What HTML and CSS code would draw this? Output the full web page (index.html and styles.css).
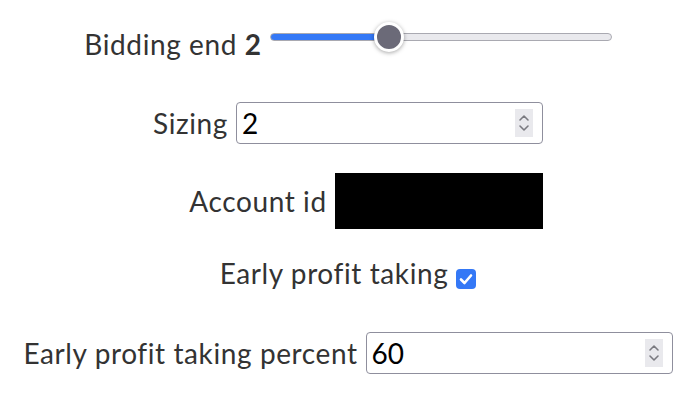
FILE: index.html
```html
<!DOCTYPE html>
<html lang="en">
<head>
  <meta charset="UTF-8" />
  <meta name="viewport" content="width=device-width, initial-scale=1.0"/>
  <title>Bot Settings</title>
  <link rel="stylesheet" href="styles.css">
</head>
<body>

<form id="settings-form">

  <div class="row row-slider">
    <label for="bidding-end">Bidding end <b id="bidding-val">2</b></label>
    <input type="range" id="bidding-end" class="slider" min="0" max="6" value="2" style="--fill: 35%">
  </div>

  <div class="row">
    <label for="sizing">Sizing</label>
    <div class="num-box">
      <input type="number" id="sizing" value="2">
      <span class="spin">
        <svg width="18" height="28" viewBox="0 0 18 28">
          <path d="M5 11 L9 7 L13 11" fill="none" stroke="#7a7a80" stroke-width="1.6" stroke-linecap="round" stroke-linejoin="round"/>
          <path d="M5 17 L9 21 L13 17" fill="none" stroke="#7a7a80" stroke-width="1.6" stroke-linecap="round" stroke-linejoin="round"/>
        </svg>
      </span>
    </div>
  </div>

  <div class="row row-account">
    <label for="account">Account id</label>
    <div class="redacted" id="account"></div>
  </div>

  <div class="row row-check">
    <label for="early-profit">Early profit taking</label>
    <span class="check" id="early-profit">
      <svg width="20" height="20" viewBox="0 0 20 20">
        <path d="M5 10.5 L8.5 14 L15 6.5" fill="none" stroke="#fff" stroke-width="2.6" stroke-linecap="round" stroke-linejoin="round"/>
      </svg>
    </span>
  </div>

  <div class="row">
    <label for="profit-percent">Early profit taking percent</label>
    <div class="num-box">
      <input type="number" id="profit-percent" value="60">
      <span class="spin">
        <svg width="18" height="28" viewBox="0 0 18 28">
          <path d="M5 11 L9 7 L13 11" fill="none" stroke="#7a7a80" stroke-width="1.6" stroke-linecap="round" stroke-linejoin="round"/>
          <path d="M5 17 L9 21 L13 17" fill="none" stroke="#7a7a80" stroke-width="1.6" stroke-linecap="round" stroke-linejoin="round"/>
        </svg>
      </span>
    </div>
  </div>

</form>

<script>
  const slider = document.getElementById('bidding-end');
  const sliderVal = document.getElementById('bidding-val');

  slider.addEventListener('input', () => {
    const pct = (slider.value - slider.min) / (slider.max - slider.min) * 100;
    slider.style.setProperty('--fill', pct + '%');
    sliderVal.textContent = slider.value;
  });
</script>

</body>
</html>
```

FILE: styles.css
```css
body {
  margin: 0;
  font-family: Lato, "Liberation Sans", sans-serif;
  background: #fff;
  color: #333;
}
form {
  display: flex;
  flex-direction: column;
  align-items: center;
  padding-top: 22px;
}
.row {
  display: flex;
  align-items: center;
  gap: 8px;
  font-size: 28px;
}
label {
  letter-spacing: 0.6px;
}
.row + .row {
  margin-top: 29px;
}
.row-slider {
  align-items: flex-start;
}
.row-slider + .row {
  margin-top: 41px;
}
.row-account + .row {
  margin-top: 27px;
}
.row-check + .row {
  margin-top: 30px;
}
.row-slider label {
  margin-top: 5px;
}
.row-check label {
  margin-bottom: 12px;
}
.row-account {
  padding-left: 36px;
}
label b {
  font-weight: 700;
}

/* range */
.slider {
  -webkit-appearance: none;
  appearance: none;
  width: 342px;
  height: 30px;
  margin: 0;
  background: transparent;
}
.slider::-webkit-slider-runnable-track {
  height: 8px;
  border-radius: 5px;
  border: 1px solid #a9a9b1;
  background: linear-gradient(to right, #3478f6 var(--fill), #e9e9ed var(--fill));
}
.slider::-webkit-slider-thumb {
  -webkit-appearance: none;
  width: 30px;
  height: 30px;
  margin-top: -12px;
  border-radius: 50%;
  border: 3px solid #fff;
  box-sizing: border-box;
  background: #6b6a78;
  box-shadow: 0 1px 4px rgba(0,0,0,0.35);
}

/* number box */
.num-box {
  display: flex;
  align-items: center;
  width: 307px;
  height: 42px;
  box-sizing: border-box;
  border: 1px solid #8f8f9d;
  border-radius: 4px;
  padding: 0 9px 0 5px;
}
.num-box input {
  flex: 1;
  min-width: 0;
  border: none;
  outline: none;
  padding: 0;
  font: inherit;
  font-size: 28px;
  color: #000;
  background: transparent;
  -moz-appearance: textfield;
}
.num-box input::-webkit-inner-spin-button,
.num-box input::-webkit-outer-spin-button {
  -webkit-appearance: none;
  margin: 0;
}
.spin {
  display: flex;
  width: 18px;
  height: 28px;
  background: #e9e9ed;
}

.redacted {
  width: 208px;
  height: 56px;
  background: #000;
}

.check {
  display: flex;
  width: 20px;
  height: 20px;
  border-radius: 4px;
  background: #3478f6;
}
```
